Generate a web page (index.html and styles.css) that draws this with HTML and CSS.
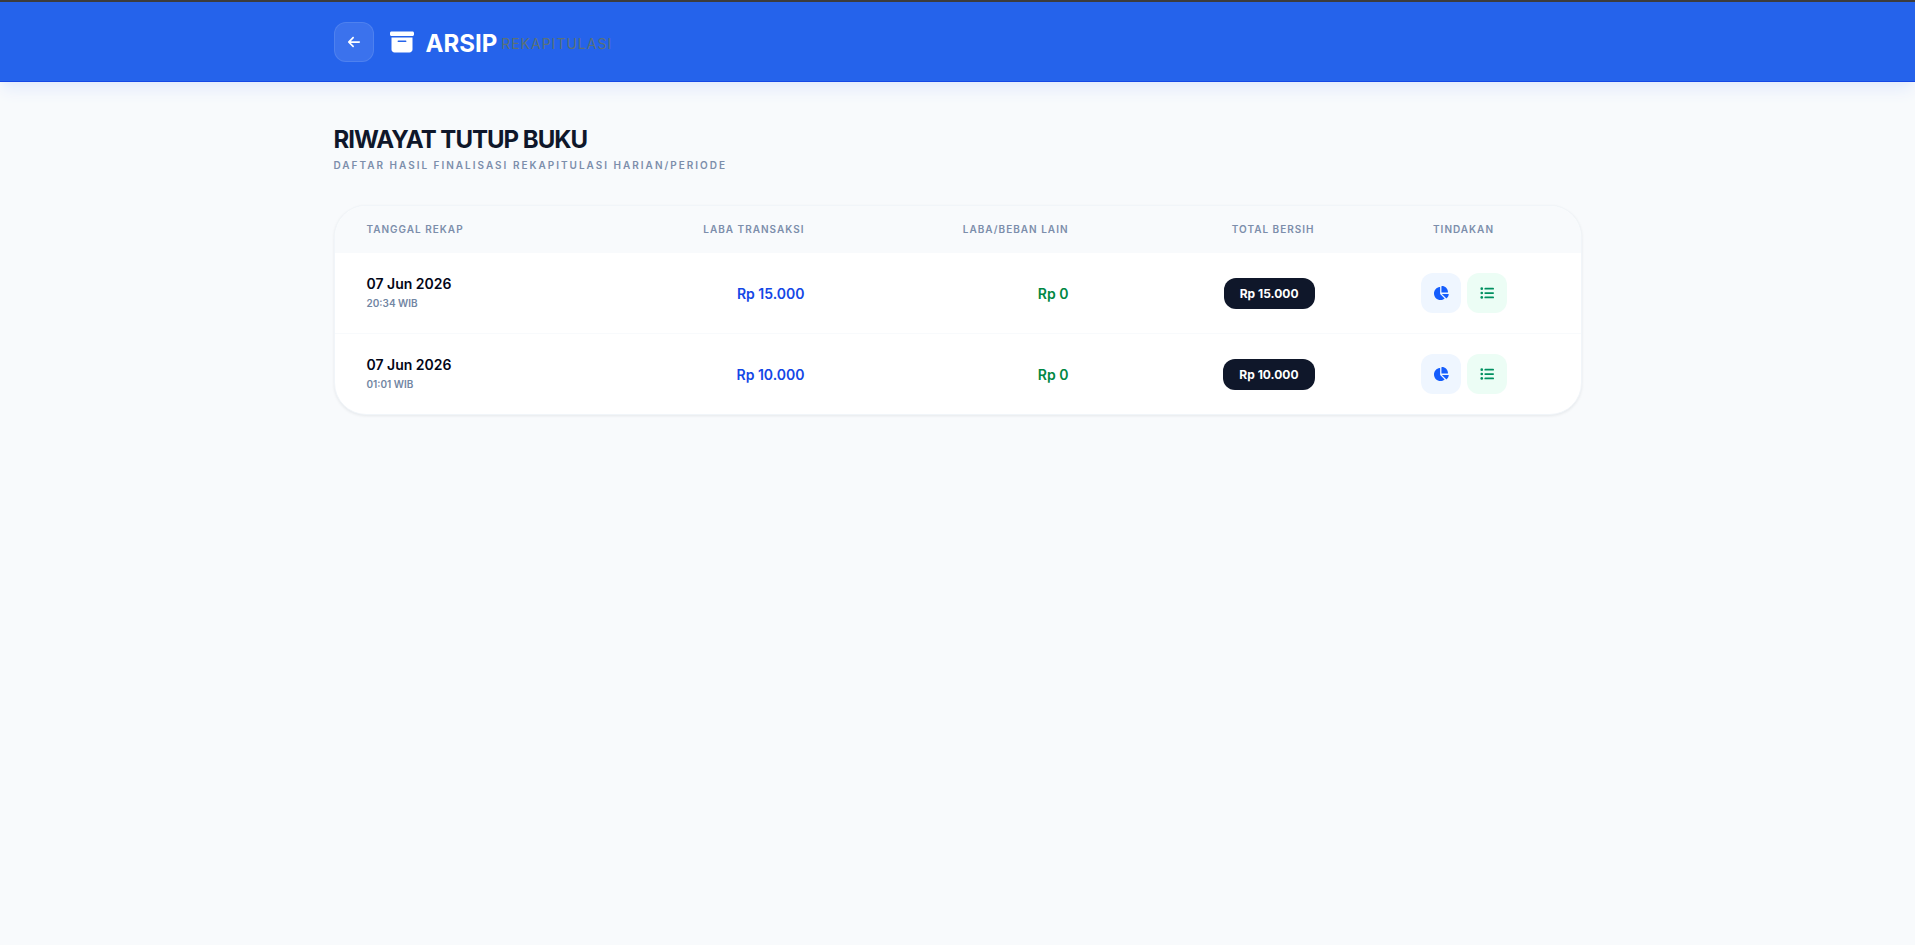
FILE: index.html
```html
<!DOCTYPE html>
<html lang="id">
<head>
<meta charset="utf-8">
<meta name="viewport" content="width=device-width, initial-scale=1">
<title>Arsip Rekapitulasi</title>
<link rel="stylesheet" href="styles.css">
</head>
<body>
<svg class="sprite" aria-hidden="true">
  <symbol id="i-back" viewBox="0 0 448 512"><path d="M9.4 233.4c-12.5 12.5-12.5 32.8 0 45.3l160 160c12.5 12.5 32.8 12.5 45.3 0s12.5-32.8 0-45.3L109.2 288 416 288c17.7 0 32-14.3 32-32s-14.3-32-32-32l-306.7 0L214.6 118.6c12.5-12.5 12.5-32.8 0-45.3s-32.8-12.5-45.3 0l-160 160z"/></symbol>
  <symbol id="i-archive" viewBox="0 0 512 512"><path d="M32 32H480c17.7 0 32 14.3 32 32V96c0 17.7-14.3 32-32 32H32C14.3 128 0 113.7 0 96V64C0 46.3 14.3 32 32 32zm0 128H480V416c0 35.3-28.7 64-64 64H96c-35.3 0-64-28.7-64-64V160zm128 80c0 8.8 7.2 16 16 16H336c8.8 0 16-7.2 16-16s-7.2-16-16-16H176c-8.8 0-16 7.2-16 16z"/></symbol>
  <symbol id="i-pie" viewBox="0 0 576 512"><path d="M304 240V16.6c0-9 7-16.6 16-16.6C443.7 0 544 100.3 544 224c0 9-7.6 16-16.6 16H304zM32 272C32 150.7 122.1 50.3 239 34.3c9.2-1.3 17 6.1 17 15.4V288L412.5 444.5c6.7 6.7 6.2 17.7-1.5 23.1C371.8 495.6 323.8 512 272 512C139.5 512 32 404.6 32 272zm526.4 16c9.3 0 16.6 7.8 15.4 17c-7.7 55.9-34.6 105.6-73.9 142.3c-6 5.6-15.4 5.2-21.2-.7L320 288H558.4z"/></symbol>
  <symbol id="i-list" viewBox="0 0 512 512"><circle cx="64" cy="96" r="48"/><circle cx="64" cy="256" r="48"/><circle cx="64" cy="416" r="48"/><rect x="160" y="64" width="352" height="64" rx="32"/><rect x="160" y="224" width="352" height="64" rx="32"/><rect x="160" y="384" width="352" height="64" rx="32"/></symbol>
</svg>

<header class="topbar">
  <div class="container topbar-inner">
    <a class="back" href="#" aria-label="Kembali"><svg class="icon-sm"><use href="#i-back"/></svg></a>
    <div class="brand">
      <svg class="icon-lg" aria-hidden="true"><use href="#i-archive"/></svg>
      <div class="brand-name"><span class="brand-main">ARSIP</span><span class="brand-sub">REKAPITULASI</span></div>
    </div>
  </div>
</header>

<main class="container content">
  <h1 class="title">RIWAYAT TUTUP BUKU</h1>
  <p class="subtitle">DAFTAR HASIL FINALISASI REKAPITULASI HARIAN/PERIODE</p>

  <div class="card">
    <table class="table">
      <colgroup><col><col><col class="c-other"><col class="c-total"><col class="c-act"></colgroup>
      <thead>
        <tr><th>TANGGAL REKAP</th><th class="num">LABA TRANSAKSI</th><th class="num">LABA/BEBAN LAIN</th><th class="num">TOTAL BERSIH</th><th class="mid">TINDAKAN</th></tr>
      </thead>
      <tbody>
        <tr>
          <td><div class="date">07 Jun 2026</div><div class="time">20:34 WIB</div></td>
          <td class="num profit">Rp 15.000</td>
          <td class="num other">Rp 0</td>
          <td class="num"><span class="total">Rp 15.000</span></td>
          <td><div class="actions">
            <button class="action action-blue" type="button" aria-label="Ringkasan"><svg class="icon-pie"><use href="#i-pie"/></svg></button>
            <button class="action action-green" type="button" aria-label="Rincian"><svg class="icon-sm"><use href="#i-list"/></svg></button>
          </div></td>
        </tr>
        <tr>
          <td><div class="date">07 Jun 2026</div><div class="time">01:01 WIB</div></td>
          <td class="num profit">Rp 10.000</td>
          <td class="num other">Rp 0</td>
          <td class="num"><span class="total">Rp 10.000</span></td>
          <td><div class="actions">
            <button class="action action-blue" type="button" aria-label="Ringkasan"><svg class="icon-pie"><use href="#i-pie"/></svg></button>
            <button class="action action-green" type="button" aria-label="Rincian"><svg class="icon-sm"><use href="#i-list"/></svg></button>
          </div></td>
        </tr>
      </tbody>
    </table>
  </div>
</main>
</body>
</html>
```
FILE: styles.css
```css
* { box-sizing: border-box; }
body {
  margin: 0;
  min-height: 100vh;
  background: #f8fafc;
  color: #0f172a;
  font-family: Inter, "Liberation Sans", sans-serif;
  font-size: 14px;
}
svg { display: block; fill: currentColor; }
.sprite { position: absolute; width: 0; height: 0; }
.container { max-width: 1280px; margin: 0 auto; padding: 0 16px; }

.topbar {
  background: #2563eb;
  border-top: 2px solid #3c3c3c;
  border-bottom: 1px solid #1447e6;
  box-shadow: 0 10px 15px -3px #e3ebfc, 0 4px 6px -4px #dbe7fe;
}
.topbar-inner { display: flex; align-items: center; gap: 16px; padding-top: 20px; padding-bottom: 19px; }
.back {
  display: flex;
  align-items: center;
  justify-content: center;
  width: 40px;
  height: 40px;
  border: 1px solid rgba(255, 255, 255, .1);
  border-radius: 12px;
  background: rgba(255, 255, 255, .1);
  color: #fff;
}
.brand { display: flex; align-items: center; gap: 12px; }
.brand-name { display: flex; align-items: center; gap: 4px; padding-top: 4px; line-height: 32px; }
.brand-main { color: #fff; font-size: 24px; font-weight: 700; }
.brand-sub { color: #5a7277; font-size: 14px; font-weight: 400; letter-spacing: 1px; }
.icon-sm { width: 14px; height: 14px; }
.icon-pie { width: 16px; height: 14px; }
.icon-lg { width: 24px; height: 24px; color: #fff; }

.content { padding-top: 42px; padding-bottom: 40px; }
.title { margin: 0; font-size: 24px; line-height: 32px; font-weight: 700; letter-spacing: -1px; }
.subtitle { margin: 2px 0 0; color: #7c8eab; font-size: 10px; line-height: 15px; font-weight: 600; letter-spacing: 2px; }

.card {
  margin-top: 32px;
  overflow: hidden;
  border: 1px solid #f1f5f9;
  border-radius: 32px;
  background: #fff;
  box-shadow: 0 1px 3px rgba(15, 23, 42, .08);
}
.table { width: 100%; table-layout: fixed; border-collapse: collapse; }
.c-other { width: 264px; }
.c-total { width: 246px; }
.c-act { width: 234px; }
th {
  padding: 16px 32px;
  background: #f8fafc;
  color: #7c8eab;
  font-size: 10px;
  line-height: 15px;
  font-weight: 600;
  letter-spacing: 1px;
  text-align: left;
  white-space: nowrap;
}
td { padding: 20px 32px; }
tbody tr + tr { border-top: 1px solid #f8fafc; }
.num { text-align: right; white-space: nowrap; }
.mid { text-align: center; }
.date { font-size: 14px; line-height: 20px; font-weight: 600; color: #020617; }
.time { margin-top: 1px; font-size: 10px; line-height: 17px; font-weight: 600; color: #7286a3; }
.profit { color: #1447e6; font-weight: 600; }
.other { color: #008743; font-weight: 600; }
.total {
  display: inline-block;
  padding: 7px 16px;
  border-radius: 12px;
  background: #0f172a;
  color: #fff;
  font-size: 12px;
  line-height: 17px;
  font-weight: 700;
}
.actions { display: flex; justify-content: center; gap: 6px; }
.action {
  display: flex;
  align-items: center;
  justify-content: center;
  width: 40px;
  height: 40px;
  padding: 0;
  border: 0;
  border-radius: 12px;
}
.action-blue { background: #eff6ff; color: #155dfc; }
.action-green { background: #ecfdf5; color: #009060; }
```
